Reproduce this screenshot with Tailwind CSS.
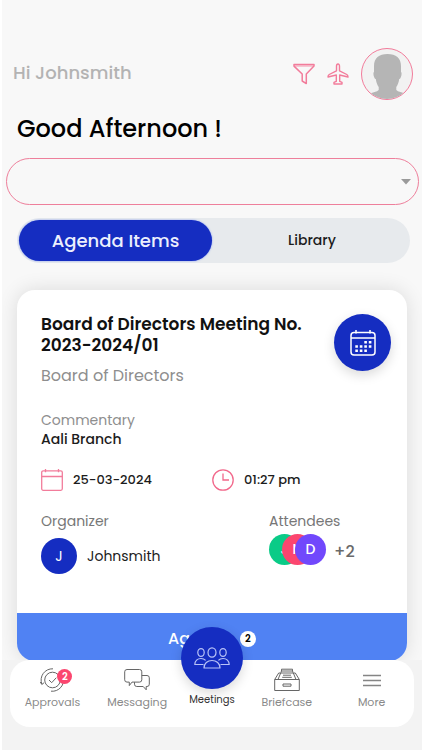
<!DOCTYPE html>
<html lang="en">
<head>
  <meta charset="UTF-8" />
  <meta name="viewport" content="width=device-width, initial-scale=1.0" />
  <title>Meetings</title>
  <script src="https://cdn.jsdelivr.net/npm/@tailwindcss/browser@4"></script>
</head>
<body class="min-h-screen overflow-x-hidden border-l-2 border-white bg-[#f8f8f8] font-['Poppins','Inter',sans-serif] text-[#1c1c1c]">

  <!-- Header -->
  <header class="flex items-center justify-between pt-12 pr-[9px] pl-[11px]">
    <p class="pb-1 text-[18px] font-medium text-[#b3b3b3]">Hi Johnsmith</p>
    <div class="flex items-center">
      <button type="button" aria-label="Filter" class="mr-3">
        <svg class="size-[22px]" viewBox="0 0 22 22" fill="none" stroke="#f27c9b" stroke-width="1.5" stroke-linejoin="round">
          <path d="M1 1.500h20v1.600L13.300 11v9.600L9.200 18v-7L1 3.100z" />
          <path d="M1.500 3h19" stroke-width=".8" />
        </svg>
      </button>
      <button type="button" aria-label="Travel" class="mr-3">
        <svg class="size-[22px]" viewBox="0 0 22 22" fill="none" stroke="#f27c9b" stroke-width="1.400" stroke-linejoin="round">
          <path d="M11 1c-.9 0-1.500 1-1.500 2.200v4.600L2.200 11.500c-.8.5-1.200 1.200-1.200 2.500l8.300-2v6.300l-2.300 1v1.700h8v-1.700l-2.300-1V12l8.300 2c0-1.300-.4-2-1.200-2.500l-7.300-3.700V3.200C12.500 2 11.900 1 11 1z" />
        </svg>
      </button>
      <button type="button" aria-label="Profile" class="size-[52px] overflow-hidden rounded-full border border-[#f27c9b] bg-[#f2f2f2]">
        <svg class="size-full" viewBox="0 0 50 50" fill="#b5b5b5">
          <path d="M25.500 5C17 5 12 9 12 17v6c-1 .5-.6 3.500.3 5.500.4 1 .9 1.500 1.500 1.600.5 3.500 1.500 6 2.900 8v3C15 43 11 43.500 6 45v7h39v-7c-5-1.500-9-2-10.700-3.900v-3c1.400-2 2.400-4.500 2.900-8 .6-.1 1.100-.6 1.500-1.600.9-2 1.300-5 .3-5.500v-6c0-8-5-12-13.500-12z" />
        </svg>
      </button>
    </div>
  </header>

  <main class="pb-24">
    <h1 class="mt-3 pl-[15px] text-[24px] leading-[34px] font-medium text-black">Good Afternoon !</h1>

    <div class="relative mt-3 mr-[3px] ml-1">
      <select aria-label="Committee" class="block h-[47px] w-full appearance-none rounded-full border border-[#ee7f9b] bg-transparent px-5">
        <option></option>
      </select>
      <svg class="pointer-events-none absolute top-[21px] right-2 h-[6px] w-[10px]" viewBox="0 0 10 6" fill="#9a9a9a"><path d="M0 0h10L5 5.500z" /></svg>
    </div>

    <!-- Tabs -->
    <div class="mt-[13px] mr-3 ml-[15px] grid grid-cols-[193fr_196fr] rounded-full bg-[#e7eaed] p-[2px]">
      <button type="button" class="h-[41px] rounded-full bg-[#152dc1] text-[18px] font-medium text-[#eceffd] shadow-[0_0_2px_#7d95f5]">Agenda Items</button>
      <button type="button" class="h-[41px] pl-1 text-[14px] font-medium">Library</button>
    </div>

    <!-- Meeting card -->
    <article class="mt-[27px] mr-[15px] ml-[15px] overflow-hidden rounded-[18px] bg-white shadow-[0_0_20px_rgba(0,0,0,0.12)]">
      <div class="pt-6 pr-4 pb-[39px] pl-6">
        <div class="flex justify-between">
          <div>
            <h2 class="text-[17px] leading-[21px] font-semibold text-[#111111]">Board of Directors Meeting No. 2023-2024/01</h2>
            <p class="mt-2 text-[16px] leading-6 text-[#8e8e8e]">Board of Directors</p>
          </div>
          <button type="button" aria-label="Add to calendar" class="flex size-[57px] shrink-0 items-center justify-center rounded-full bg-[#152dc1] shadow-[0_4px_12px_rgba(0,0,0,0.15)]">
            <svg class="size-[26px]" viewBox="0 0 26 26" fill="none" stroke="#fff" stroke-width="1.5">
              <rect x="1" y="2.500" width="24" height="22.500" rx="3" />
              <path d="M1 8h24M6 0v3.500M20 0v3.500" />
              <path d="M14.300 12.200h2.600M18.800 12.200h2.600M5.300 16.500h2.600M9.800 16.500h2.600M14.300 16.500h2.600M18.800 16.500h2.600M5.300 20.700h2.600M9.800 20.700h2.600M14.300 20.700h2.600" stroke-width="2.600" />
            </svg>
          </button>
        </div>

        <p class="mt-[22px] text-[14px] leading-5 text-[#8e8e8e]">Commentary</p>
        <p class="text-[14px] leading-[18px] font-medium">Aali Branch</p>

        <div class="mt-[21px] grid grid-cols-[171fr_179fr] text-[13px] leading-[22px] font-medium">
          <div class="flex items-center gap-[10px]">
            <svg class="size-[22px]" viewBox="0 0 22 22" fill="none" stroke="#f27c9b" stroke-width="1.300">
              <rect x=".7" y="1.800" width="20.600" height="19.500" rx="1.500" />
              <path d="M.6 7.500h20.800M4.500 0v3.200M17.500 0v3.200" />
            </svg>
            <span>25-03-2024</span>
          </div>
          <div class="flex items-center gap-[10px]">
            <svg class="size-[22px]" viewBox="0 0 22 22" fill="none" stroke="#f2688b" stroke-width="1.300">
              <circle cx="11" cy="11" r="10.200" />
              <path d="M11 4.500V11h6" />
            </svg>
            <span>01:27 pm</span>
          </div>
        </div>

        <div class="mt-5 grid grid-cols-[228fr_122fr] text-[14px]">
          <div>
            <p class="leading-5 text-[#777777]">Organizer</p>
            <div class="mt-[7px] flex items-center gap-[10px]">
              <span class="flex size-9 items-center justify-center rounded-full bg-[#152dc1] text-white">J</span>
              <span>Johnsmith</span>
            </div>
          </div>
          <div>
            <p class="leading-5 text-[#777777]">Attendees</p>
            <div class="mt-[3px] flex items-center font-medium text-white">
              <span class="flex size-[31px] items-center justify-center rounded-full bg-[#0acb87]">J</span>
              <span class="-ml-[18px] flex size-[31px] items-center justify-center rounded-full bg-[#fb466f]">N</span>
              <span class="-ml-[18px] flex size-[31px] items-center justify-center rounded-full bg-[#7148fc]">D</span>
              <span class="ml-2 pt-1 text-[16px] text-[#6a6a6a]">+2</span>
            </div>
          </div>
        </div>
      </div>
      <button type="button" class="flex h-12 w-full items-center justify-center gap-2 bg-[#5082f3] pt-[3px] text-[16px] font-medium text-white">
        Agenda
        <span class="flex size-4 items-center justify-center rounded-full bg-white text-[10px] font-semibold text-black">2</span>
      </button>
    </article>
  </main>

  <!-- Bottom navigation -->
  <nav class="fixed inset-x-0 bottom-0 border-l-2 border-white bg-[#f3f3f3] pr-2 pb-[23px] pl-2">
    <div class="grid h-[67px] grid-cols-[85fr_85fr_65fr_85fr_85fr] rounded-[20px] bg-white text-[11px] leading-4 text-[#8a8a8a]">
      <a href="#approvals" class="flex flex-col items-center gap-[2px] pt-2">
        <span class="relative">
          <svg class="size-6" viewBox="0 0 24 24" fill="none" stroke="#666" stroke-width="1">
            <circle cx="12.500" cy="12" r="7.800" />
            <path d="M9 12l2.700 2.700 4.600-5" />
            <path d="M13 .8A11.300 11.300 0 0 0 1.800 16M11 23.200A11.300 11.300 0 0 0 23.200 9" />
            <path d="M.3 14l1.500 2.500 2.300-1.800" />
          </svg>
          <span class="absolute top-px left-[17px] flex size-[15px] items-center justify-center rounded-full bg-[#fb466f] text-[10px] font-semibold text-white">2</span>
        </span>
        Approvals
      </a>
      <a href="#messaging" class="flex flex-col items-center gap-[2px] pt-2">
        <svg class="h-6 w-[26px]" viewBox="0 0 26 24" fill="none" stroke="#666" stroke-width="1" stroke-linejoin="round">
          <path d="M3 1.500h12.500a2.300 2.300 0 0 1 2.300 2.300v8a2.300 2.300 0 0 1-2.300 2.300H8l-2.700 3.500v-3.500H3A2.300 2.300 0 0 1 .7 11.800v-8A2.300 2.300 0 0 1 3 1.500z" />
          <path d="M17.800 7.500H23a2.300 2.300 0 0 1 2.300 2.300v6.400a2.300 2.300 0 0 1-2.300 2.300h-.8v3.300l-3-3.300h-6.400a2.300 2.300 0 0 1-2.300-2.300v-2" />
        </svg>
        Messaging
      </a>
      <a href="#meetings" class="relative flex flex-col items-center justify-end pb-[19px] text-[10px] text-[#333333]">
        <span class="absolute -top-[33px] flex size-[62px] items-center justify-center rounded-full bg-[#152dc1] shadow-[0_4px_12px_rgba(0,0,0,0.15)]">
          <svg class="h-[22px] w-9" viewBox="0 0 36 22" fill="none" stroke="#b9c3f7" stroke-width="1.200" stroke-linejoin="round">
            <ellipse cx="18" cy="5.500" rx="4" ry="4.700" />
            <ellipse cx="7" cy="5.500" rx="3.200" ry="3.900" />
            <ellipse cx="29" cy="5.500" rx="3.200" ry="3.900" />
            <path d="M10 21c0-4.500 3.500-7.500 8-7.500s8 3 8 7.500z" />
            <path d="M9.500 17.500H.8c0-3.700 2.700-6 6.200-6 1.900 0 3.500.7 4.600 1.900M26.500 17.500h8.700c0-3.700-2.700-6-6.200-6-1.900 0-3.500.7-4.600 1.900" />
          </svg>
        </span>
        Meetings
      </a>
      <a href="#briefcase" class="flex flex-col items-center gap-[2px] pt-2">
        <svg class="h-6 w-[26px]" viewBox="0 0 26 24" fill="none" stroke="#666" stroke-width="1" stroke-linejoin="round">
          <path d="M.7 11.500h24.600v11H.7zM.7 11.500l4-6.500h1.500M25.300 11.500l-4-6.500h-1.500" />
          <path d="M4 11.500l3.500-8.500h11l3.500 8.500M7.500 3V1.200h11V3M7 5h12" />
          <path d="M9 7.200h8M8.200 9.300h9.600" />
          <rect x="9" y="16" width="8" height="2.200" />
        </svg>
        Briefcase
      </a>
      <a href="#more" class="flex flex-col items-center gap-[2px] pt-2">
        <svg class="size-6" viewBox="0 0 24 24" fill="none" stroke="#858585" stroke-width="1.500"><path d="M3 7.500h18M3 12.500h18M3 17.500h18" /></svg>
        More
      </a>
    </div>
  </nav>
</body>
</html>
